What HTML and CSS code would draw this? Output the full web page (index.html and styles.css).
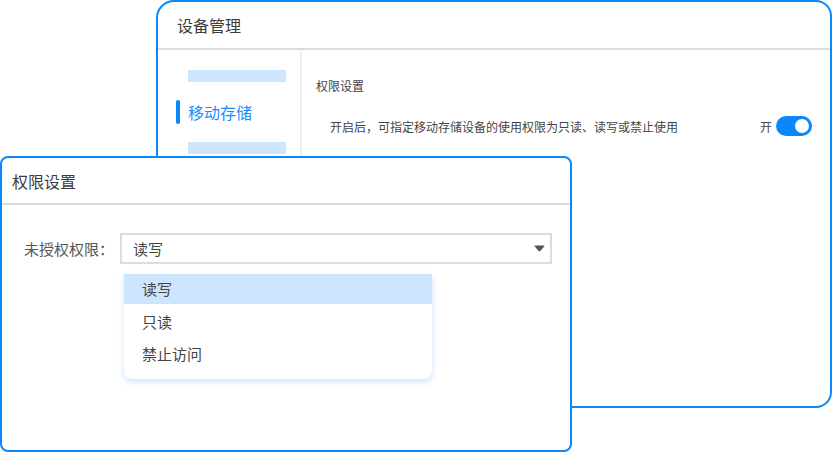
FILE: index.html
```html
<!DOCTYPE html>
<html lang="zh-CN">
<head>
<meta charset="utf-8">
<title>设备管理</title>
<link rel="stylesheet" href="styles.css">
</head>
<body>
<div class="desk">
  <section class="win win-back">
    <header class="win-head">设备管理</header>
    <div class="win-body">
      <nav class="side">
        <div class="side-block"></div>
        <div class="side-item active">移动存储</div>
        <div class="side-block"></div>
      </nav>
      <main class="content">
        <div class="sec-title">权限设置</div>
        <div class="opt-row">
          <span class="opt-text">开启后，可指定移动存储设备的使用权限为只读、读写或禁止使用</span>
          <span class="opt-switch">
            <span class="opt-label">开</span>
            <span class="toggle"><span class="knob"></span></span>
          </span>
        </div>
      </main>
    </div>
  </section>

  <section class="win win-front">
    <header class="win-head front-head">权限设置</header>
    <div class="front-body">
      <div class="field">
        <label class="field-label">未授权权限：</label>
        <div class="select">
          <span class="select-value">读写</span>
          <svg class="caret" width="11" height="7" viewBox="0 0 11 7"><path d="M1.2 0.6 H9.8 Q10.8 0.6 10.2 1.5 L6.3 5.9 Q5.5 6.8 4.7 5.9 L0.8 1.5 Q0.2 0.6 1.2 0.6 Z" fill="#555"/></svg>
        </div>
      </div>
      <ul class="menu">
        <li class="menu-item selected">读写</li>
        <li class="menu-item">只读</li>
        <li class="menu-item">禁止访问</li>
      </ul>
    </div>
  </section>
</div>
</body>
</html>
```

FILE: styles.css
```css
* { box-sizing: border-box; }
html, body { margin: 0; padding: 0; background: #fff; }
body {
  font-family: "Noto Sans CJK SC", "Noto Sans", sans-serif;
  color: #444;
}
.desk {
  position: relative;
  width: 832px;
  height: 452px;
  overflow: hidden;
}
.win {
  position: absolute;
  background: #fff;
  border: 2px solid #0a88fb;
}
.win-back {
  left: 156px;
  top: 0;
  width: 676px;
  height: 408px;
  border-radius: 18px 16px 16px 0;
  display: flex;
  flex-direction: column;
}
.win-head {
  height: 48px;
  border-bottom: 2px solid #dcdcdc;
  padding-left: 19px;
  display: flex;
  align-items: center;
  font-size: 16px;
  color: #3c3c3c;
  flex: none;
}
.win-body {
  flex: 1;
  display: flex;
}
.side {
  width: 144px;
  border-right: 2px solid #efefef;
  padding-top: 20px;
  display: flex;
  flex-direction: column;
  gap: 18px;
}
.side-block {
  margin-left: 30px;
  width: 98px;
  height: 12px;
  background: #cde6fd;
}
.side-item {
  position: relative;
  height: 24px;
  line-height: 24px;
  padding-left: 30px;
  font-size: 16px;
  color: #1a8cff;
}
.side-item.active::before {
  content: "";
  position: absolute;
  left: 18px;
  top: 0;
  width: 4px;
  height: 24px;
  border-radius: 2px;
  background: #0a88fb;
}
.content {
  flex: 1;
  padding: 28px 18px 0 14px;
}
.sec-title {
  font-size: 12px;
  line-height: 16px;
  color: #444;
}
.opt-row {
  margin-top: 22px;
  padding-left: 14px;
  display: flex;
  align-items: center;
  justify-content: space-between;
  height: 20px;
}
.opt-text {
  font-size: 12px;
  color: #444;
}
.opt-switch {
  display: flex;
  align-items: center;
  gap: 4px;
}
.opt-label {
  font-size: 12px;
  color: #444;
}
.toggle {
  width: 36px;
  height: 20px;
  border-radius: 10px;
  background: #0a88fb;
  display: flex;
  align-items: center;
  justify-content: flex-end;
  padding-right: 3px;
}
.knob {
  width: 14px;
  height: 14px;
  border-radius: 50%;
  background: #fff;
}

.win-front {
  left: 0;
  top: 156px;
  width: 572px;
  height: 296px;
  border-radius: 8px;
}
.front-head {
  height: 47px;
  padding-left: 10px;
}
.front-body {
  position: relative;
  padding: 28px 18px 0 22px;
}
.field {
  display: flex;
  align-items: center;
}
.field-label {
  width: 96px;
  font-size: 15px;
  color: #555;
  white-space: nowrap;
}
.select {
  flex: 1;
  height: 31px;
  border: 2px solid #dcdcdc;
  display: flex;
  align-items: center;
  justify-content: space-between;
  padding: 0 5px 0 11px;
}
.select-value {
  font-size: 15px;
  color: #444;
}
.caret { display: block; }
.menu {
  position: absolute;
  left: 122px;
  top: 69px;
  width: 308px;
  margin: 0;
  padding: 0 0 9px;
  list-style: none;
  background: #fff;
  border-radius: 0 0 8px 8px;
  box-shadow: 0 3px 6px rgba(30, 130, 240, 0.22);
}
.menu-item {
  height: 32px;
  line-height: 32px;
  padding-left: 18px;
  font-size: 15px;
  color: #444;
}
.menu-item.selected {
  background: #cde6fd;
  height: 30px;
  line-height: 30px;
  margin-bottom: 2px;
}
```
